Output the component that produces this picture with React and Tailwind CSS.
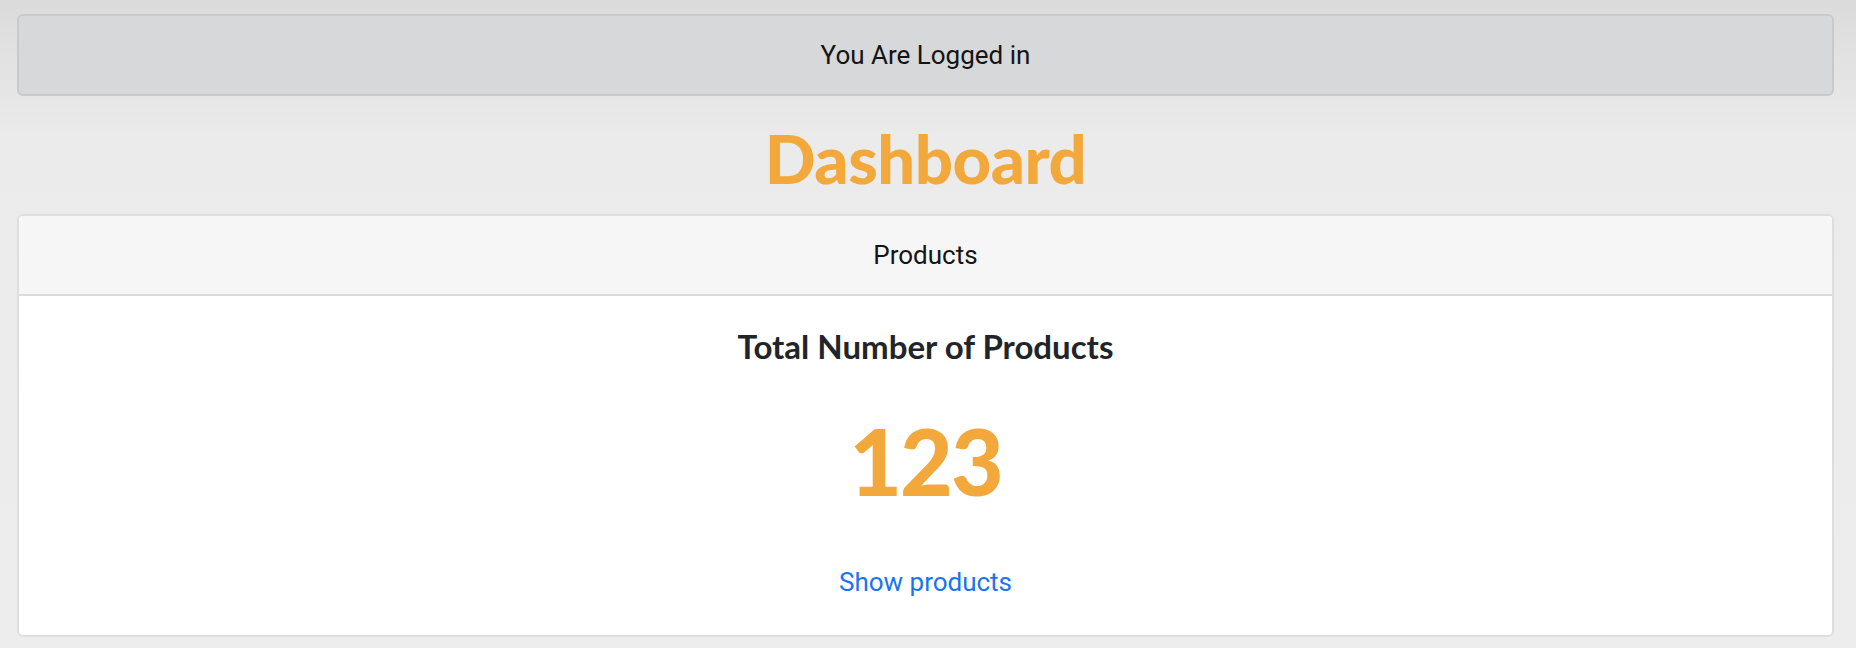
export default function App() {
  const total = 123

  return (
    <div className="min-h-[648px] bg-[linear-gradient(180deg,#dbdbdc_0px,#ebebeb_140px,#ededed_100%)] pt-[14px] pb-[12px] pl-[17px] pr-[22px] font-['Roboto',sans-serif]">
      {/* Alert */}
      <div className="h-[82px] flex items-center justify-center bg-[#d7d8da] border-2 border-[#c8c9cb] rounded-[6px] text-[26px] text-[#141414]">
        You Are Logged in
      </div>

      {/* Title */}
      <h1 className="h-[118px] flex items-center justify-center text-[#f2a83b] text-[67px] font-black tracking-[-0.5px] font-['Lato',sans-serif] pt-[6px]">
        Dashboard
      </h1>

      {/* Card */}
      <div className="h-[423px] bg-white border-2 border-[#dedede] rounded-[6px] overflow-hidden flex flex-col">
        <div className="h-[80px] shrink-0 flex items-center justify-center bg-[#f6f6f6] border-b-2 border-[#dcdcdc] text-[26px] text-[#141414]">
          Products
        </div>
        <div className="flex-1 flex flex-col items-center">
          <h3 className="mt-[34px] text-[33px] font-bold text-[#212529] font-['Lato',sans-serif] leading-none">
            Total Number of Products
          </h3>
          <p className="mt-[52px] text-[91px] font-black text-[#f2a83b] font-['Lato',sans-serif] leading-none tracking-[-2px]">
            {total}
          </p>
          <a href="#" className="mt-[63px] text-[26px] text-[#1a73f0] leading-none">
            Show products
          </a>
        </div>
      </div>
    </div>
  )
}
